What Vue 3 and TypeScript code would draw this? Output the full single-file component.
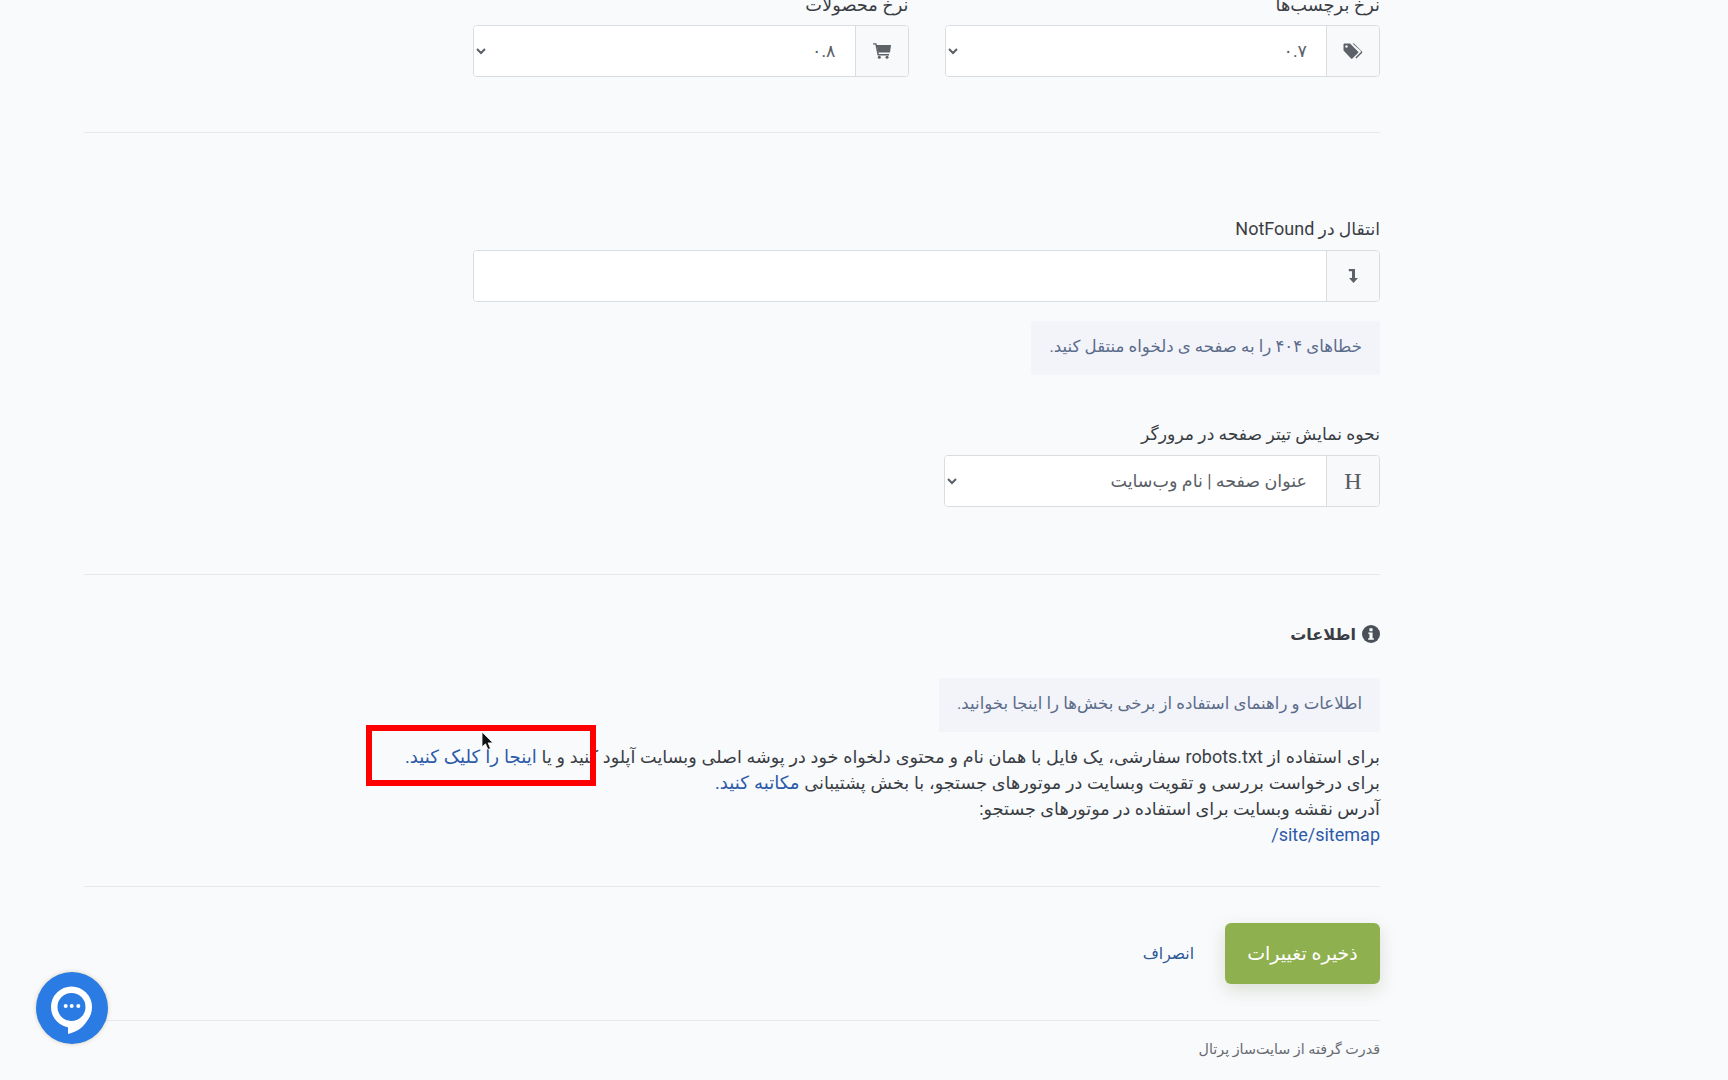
<script setup lang="ts">
interface Rate { label: string; value: string; icon: 'tag' | 'cart' }
const rates: Rate[] = [
  { label: 'نرخ برچسب‌ها', value: '۰.۷', icon: 'tag' },
  { label: 'نرخ محصولات', value: '۰.۸', icon: 'cart' },
]
</script>

<template>
  <main class="page" dir="rtl">
    <section class="rates">
      <div v-for="r in rates" :key="r.label" class="field">
        <label class="label">{{ r.label }}</label>
        <div class="group">
          <span class="addon">
            <svg v-if="r.icon === 'tag'" width="20" height="16" viewBox="0 0 20 16" fill="#5d6168">
              <path d="M.5 1.500q0-1 1-1H7l8 8q.7.7 0 1.400l-5.600 5.600q-.7.7-1.400 0L.5 7.500z" />
              <path d="M9.500.5H11l8 8q.7.7 0 1.400l-5.600 5.600-1-1 5.300-5.300q.7-.7 0-1.400z" />
              <circle cx="3.500" cy="3.500" r="1.200" fill="#f8f9fa" />
            </svg>
            <svg v-else width="18" height="16" viewBox="0 0 18 16" fill="#5d6168">
              <path d="M3.600 2H18l-1 7.500H5.400z" />
              <path d="M0 .2h3.500l2.400 10.900H16v1.400H4.600L2.300 1.600H0z" />
              <circle cx="6.300" cy="14.300" r="1.500" />
              <circle cx="14" cy="14.300" r="1.500" />
            </svg>
          </span>
          <select class="control"><option>{{ r.value }}</option></select>
        </div>
      </div>
    </section>
    <hr class="rule rule-a" />

    <section class="field notfound">
      <label class="label">انتقال در <span class="latin">NotFound</span></label>
      <div class="group">
        <span class="addon">
          <svg width="11" height="14" viewBox="0 0 11 14" fill="#5d6168">
            <path d="M.8 0h6.200v9h3l-4.500 5-4.500-5h3V2.200H.8z" />
          </svg>
        </span>
        <input class="control" type="text" />
      </div>
      <p class="hint">خطاهای ۴۰۴ را به صفحه ی دلخواه منتقل کنید.</p>
    </section>

    <section class="field half title-mode">
      <label class="label">نحوه نمایش تیتر صفحه در مرورگر</label>
      <div class="group">
        <span class="addon addon-h">H</span>
        <select class="control"><option>عنوان صفحه | نام وب‌سایت</option></select>
      </div>
    </section>
    <hr class="rule rule-b" />

    <h2 class="heading">
      <svg width="18" height="18" viewBox="0 0 17 17">
        <circle cx="8.500" cy="8.500" r="8.500" fill="#4a5058" />
        <rect x="7" y="3" width="3" height="2.800" rx=".4" fill="#f9fafc" />
        <path d="M6 7h4v5.400h1.200V14H5.800v-1.600H7V8.600H6z" fill="#f9fafc" />
      </svg>
      اطلاعات
    </h2>
    <p class="hint hint-info">اطلاعات و راهنمای استفاده از برخی بخش‌ها را اینجا بخوانید.</p>
    <div class="info-text">
      <div class="spaced">برای استفاده از <span class="latin">robots.txt</span> سفارشی، یک فایل با همان نام و محتوی دلخواه خود در پوشه اصلی وبسایت آپلود کنید و یا <a href="#">اینجا را کلیک کنید.</a></div>
      <div class="spaced">برای درخواست بررسی و تقویت وبسایت در موتورهای جستجو، با بخش پشتیبانی <a href="#">مکاتبه کنید.</a></div>
      <div>آدرس نقشه وبسایت برای استفاده در موتورهای جستجو:</div>
      <div><a href="#" class="latin" dir="ltr">/site/sitemap</a></div>
    </div>
    <hr class="rule rule-c" />

    <div class="actions">
      <button class="save" type="button">ذخیره تغییرات</button>
      <a class="cancel" href="#">انصراف</a>
    </div>
    <hr class="rule rule-d" />
    <footer class="foot">قدرت گرفته از سایت‌ساز پرتال</footer>

    <div class="mark"></div>
    <svg class="cursor" width="14" height="20" viewBox="0 0 14 20">
      <path d="M1 0v15l3.500-3.200 2.400 5.700 2.600-1.100-2.400-5.500H12z" fill="#111" stroke="#fff" stroke-width=".8" />
    </svg>
    <div class="chat">
      <svg width="72" height="72" viewBox="0 0 72 72" fill="#fff">
        <circle cx="35.500" cy="35" r="17.250" fill="none" stroke="#fff" stroke-width="6.500" />
        <path d="M32 48.600V62C42 60 51 53 55 41L45.900 44.400A14 14 0 0 1 32 48.600z" />
        <circle cx="29.700" cy="34" r="2" />
        <circle cx="35.700" cy="34" r="2" />
        <circle cx="42.300" cy="34" r="2" />
      </svg>
    </div>
  </main>
</template>

<style>
html, body { margin: 0; height: 100%; overflow: hidden; background: #f9fafc; }
</style>

<style scoped>
.page {
  position: relative;
  box-sizing: border-box;
  width: 1728px;
  height: 1080px;
  overflow: hidden;
  padding: 0 348px;
  font-family: Roboto, "DejaVu Sans", sans-serif;
  font-size: 17.600px;
  color: #212529;
  background: #f9fafc;
}
.latin { font-family: Roboto, sans-serif; font-size: 18px; }
.rates { display: flex; gap: 36px; width: 907px; margin-top: -8px; }
.rates .field { flex: 1; }
.rates .label { margin-bottom: 7px; font-size: 17.800px; }
.field { display: block; }
.half { width: 436px; }
.label { display: block; height: 26px; line-height: 26px; margin-bottom: 8px; font-size: 17.200px; color: #3a3e44; }
.group {
  display: flex;
  box-sizing: border-box;
  height: 52px;
  border: 1px solid #d9dce0;
  border-radius: 4px;
  background: #fff;
  overflow: hidden;
}
.addon {
  flex: none;
  display: flex;
  align-items: center;
  justify-content: center;
  width: 52px;
  background: #f8f9fa;
  border-left: 1px solid #d9dce0;
}
.addon-h { font-family: "Liberation Serif", serif; font-size: 24px; color: #555b64; }
.control {
  flex: 1;
  min-width: 0;
  height: 100%;
  border: 0;
  outline: 0;
  background: #fff;
  padding: 0 15px 0 4px;
  font: inherit;
  font-size: 17.500px;
  color: #5a6067;
}
.rule { height: 1px; border: 0; margin: 0; background: #e6e8eb; width: 1296px; }
.rule-a { margin-top: 55px; }
.notfound { width: 907px; margin-top: 83px; }
.hint {
  width: fit-content;
  box-sizing: border-box;
  height: 54px;
  line-height: 52px;
  margin: 19px 0 0;
  padding: 0 18px;
  background: #f2f4f9;
  border-radius: 3px;
  color: #5b6b8a;
  font-size: 16.600px;
}
.title-mode { margin-top: 46px; }
.rule-b { margin-top: 67px; }
.heading {
  display: flex;
  align-items: center;
  gap: 6px;
  height: 26px;
  margin: 46px 0 0;
  font-size: 16px;
  font-weight: 700;
  color: #3a3e44;
}
.hint-info { margin-top: 31px; }
.info-text { margin-top: 12px; width: 1100px; line-height: 26px; color: #3a3e44; }
.spaced { word-spacing: .4px; }
.info-text .spaced a { font-size: 18.200px; }
.info-text a { color: #2c5aa8; text-decoration: none; }
.rule-c { margin-top: 38px; }
.actions { display: flex; align-items: center; gap: 31px; margin-top: 36px; }
.save {
  width: 155px;
  height: 61px;
  border: 0;
  border-radius: 6px;
  background: #8fb04f;
  color: #fff;
  font: inherit;
  font-size: 19px;
  box-shadow: 0 6px 18px rgba(80, 100, 40, .18);
}
.cancel { color: #2b5796; text-decoration: none; font-size: 15.600px; }
.rule-d { margin-top: 36px; }
.foot { margin-top: 18px; line-height: 20px; font-size: 14.300px; color: #686c72; }
.mark {
  position: absolute;
  left: 366px;
  top: 725px;
  box-sizing: border-box;
  width: 230px;
  height: 61px;
  border: 6px solid #fe0000;
}
.cursor { position: absolute; left: 481px; top: 732px; }
.chat {
  position: absolute;
  left: 36px;
  top: 972px;
  width: 72px;
  height: 72px;
  border-radius: 50%;
  background: #2a7be4;
  box-shadow: 0 0 4px rgba(160, 130, 60, .35);
}
</style>
